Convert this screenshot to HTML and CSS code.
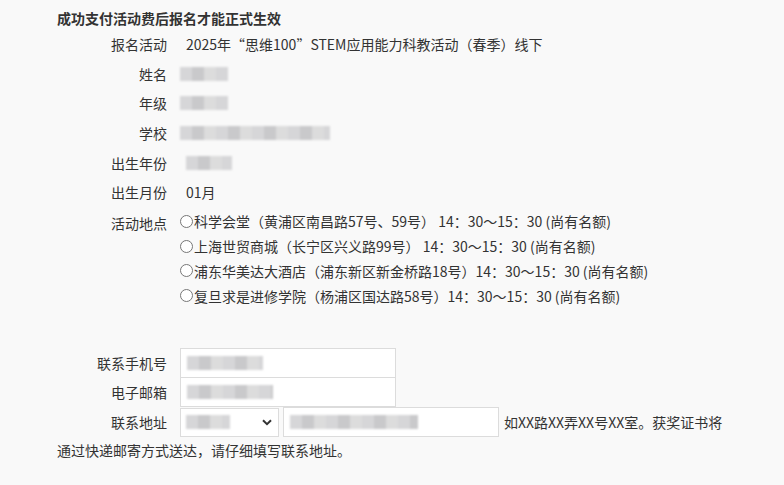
FILE: index.html
```html
<!DOCTYPE html>
<html lang="zh-CN">
<head>
    <meta charset="UTF-8">
    <meta name="viewport" content="width=device-width, initial-scale=1.0">
    <title>报名信息确认</title>
    <link rel="stylesheet" href="styles.css">
</head>
<body>
    <div class="signup">
        <h3 class="notice">成功支付活动费后报名才能正式生效</h3>

        <div class="row">
            <span class="label">报名活动</span>
            <span class="value">2025年“思维100”STEM应用能力科教活动（春季）线下</span>
        </div>
        <div class="row">
            <span class="label">姓名</span>
            <span class="mask mask-short"></span>
        </div>
        <div class="row">
            <span class="label">年级</span>
            <span class="mask mask-short"></span>
        </div>
        <div class="row">
            <span class="label">学校</span>
            <span class="mask mask-long"></span>
        </div>
        <div class="row">
            <span class="label">出生年份</span>
            <span class="value mask mask-year"></span>
        </div>
        <div class="row">
            <span class="label">出生月份</span>
            <span class="value">01月</span>
        </div>

        <div class="row places">
            <span class="label">活动地点</span>
            <div class="options">
                <label class="option"><input type="radio" name="place">科学会堂（黄浦区南昌路57号、59号） 14：30～15：30 (尚有名额)</label>
                <label class="option"><input type="radio" name="place">上海世贸商城（长宁区兴义路99号） 14：30～15：30 (尚有名额)</label>
                <label class="option"><input type="radio" name="place">浦东华美达大酒店（浦东新区新金桥路18号）14：30～15：30 (尚有名额)</label>
                <label class="option"><input type="radio" name="place">复旦求是进修学院（杨浦区国达路58号）14：30～15：30 (尚有名额)</label>
            </div>
        </div>

        <div class="contact">
            <div class="field">
                <span class="label">联系手机号</span>
                <span class="box"><span class="mask mask-phone"></span></span>
            </div>
            <div class="field">
                <span class="label">电子邮箱</span>
                <span class="box"><span class="mask mask-mail"></span></span>
            </div>
            <div class="field address">
                <span class="label">联系地址</span>
                <span class="picker"><span class="mask mask-area"></span>
                    <svg class="chevron" width="10" height="7" viewBox="0 0 10 7"><path d="M1 1.2 5 5.2 9 1.2" fill="none" stroke="#333" stroke-width="2"/></svg>
                </span>
                <span class="box street"><span class="mask mask-street"></span></span>
                <span class="hint">如XX路XX弄XX号XX室。获奖证书将</span>
            </div>
            <div class="hint-more">通过快递邮寄方式送达，请仔细填写联系地址。</div>
        </div>
    </div>
</body>
</html>
```

FILE: styles.css
```css
/* General styles */
body {
    margin: 0;
    background-color: #f9f9f9;
    color: #333;
    font-family: "Microsoft YaHei", "Noto Sans CJK SC", sans-serif;
    font-size: 14px;
}

.signup {
    padding: 9px 0 0 57px;
}

.notice {
    margin: 0 0 2px;
    font-size: 14px;
    font-weight: bold;
    line-height: 18px;
}

/* Read-only rows */
.row {
    display: flex;
    align-items: center;
    height: 29.7px;
}

.label {
    display: inline-block;
    width: 110px;
    text-align: right;
    margin-right: 13px;
    flex-shrink: 0;
}

.value {
    margin-left: 6px;
}

/* Blurred personal data */
.mask {
    display: inline-block;
    height: 14px;
    filter: blur(0.8px);
    background: repeating-linear-gradient(90deg, #d6d6d8 0 12px, #c9c9cb 12px 24px, #dcdcdc 24px 36px);
}

.mask-short { width: 48px; }
.mask-long { width: 150px; }
.mask-year { width: 46px; }
.mask-phone { width: 76px; }
.mask-mail { width: 86px; }
.mask-area { width: 44px; }
.mask-street { width: 128px; }

/* Places */
.places {
    align-items: flex-start;
    height: auto;
    margin-top: 2px;
}

.places .label {
    margin-top: 4px;
}

.options {
    display: flex;
    flex-direction: column;
}

.option {
    display: flex;
    align-items: center;
    height: 24.7px;
}

.option input {
    width: 13px;
    height: 13px;
    margin: 0 1px 0 0;
}

/* Contact fields */
.contact {
    margin-top: 40px;
}

.field {
    display: flex;
    align-items: center;
}

.box {
    display: inline-flex;
    align-items: center;
    box-sizing: border-box;
    width: 216px;
    height: 30px;
    padding-left: 6px;
    background-color: #fff;
    border: 1px solid #dcdcdc;
}

.field + .field .box {
    margin-top: -1px;
}

.address {
    gap: 5px;
    margin-top: 1px;
}

.address .label {
    margin-right: 8px;
}

.picker {
    display: inline-flex;
    align-items: center;
    justify-content: space-between;
    box-sizing: border-box;
    width: 99px;
    height: 29px;
    padding: 0 6px 0 5px;
    background-color: #fff;
    border: 1px solid #dcdcdc;
}

.address .street {
    margin-top: 1px;
    margin-left: -1px;
}

.hint-more {
    line-height: 26px;
}
```
